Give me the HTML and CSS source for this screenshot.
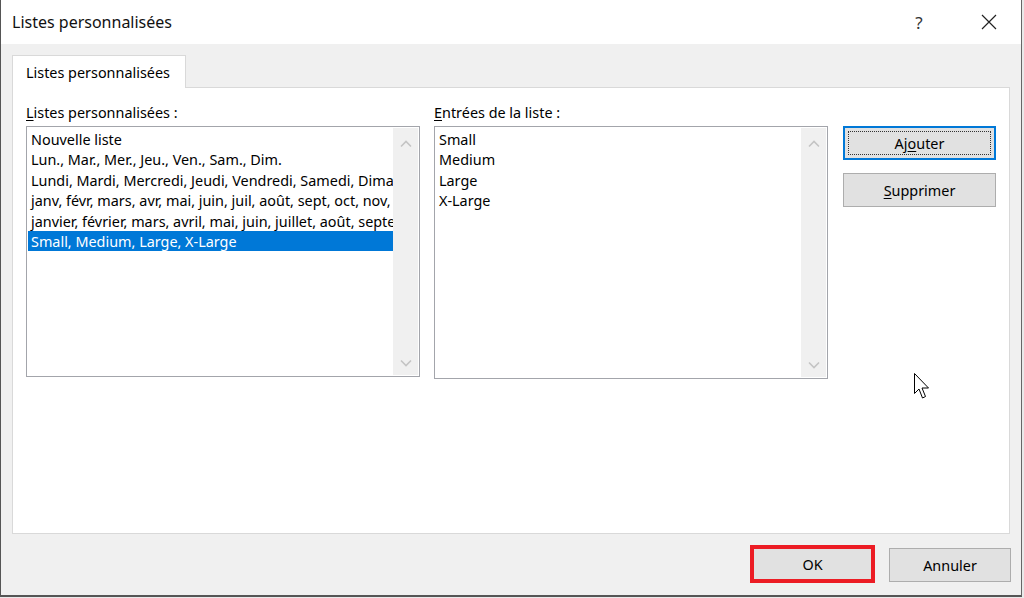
FILE: index.html
```html
<!DOCTYPE html>
<html lang="fr">
<head>
<meta charset="utf-8">
<title>Listes personnalisées</title>
<link rel="stylesheet" href="styles.css">
</head>
<body>
<div class="window">
  <div class="titlebar">
    <div class="title">Listes personnalisées</div>
    <div class="tb-btns">
      <span class="help">?</span>
      <span class="close"><svg width="16" height="16" viewBox="0 0 16 16"><path d="M1 1L15 15M15 1L1 15" stroke="#222" stroke-width="1.2" fill="none"/></svg></span>
    </div>
  </div>
  <div class="content">
    <div class="tabs">
      <div class="tab">Listes personnalisées</div>
    </div>
    <div class="panel">
      <div class="label"><u>L</u>istes personnalisées :</div>
      <div class="label"><u>E</u>ntrées de la liste :</div>
      <div></div>
      <div class="listbox listbox-left">
        <div class="items">
          <div class="item">Nouvelle liste</div>
          <div class="item">Lun., Mar., Mer., Jeu., Ven., Sam., Dim.</div>
          <div class="item">Lundi, Mardi, Mercredi, Jeudi, Vendredi, Samedi, Dimanche</div>
          <div class="item">janv, févr, mars, avr, mai, juin, juil, août, sept, oct, nov, déc</div>
          <div class="item">janvier, février, mars, avril, mai, juin, juillet, août, septembre, octobre, novembre, décembre</div>
          <div class="item selected">Small, Medium, Large, X-Large</div>
        </div>
        <div class="scrollbar">
          <svg class="chev" width="12" height="8" viewBox="0 0 12 8"><path d="M1 6.5L6 1.5L11 6.5" stroke="#c4c4c4" stroke-width="1.6" fill="none"/></svg>
          <svg class="chev" width="12" height="8" viewBox="0 0 12 8"><path d="M1 1.5L6 6.5L11 1.5" stroke="#c4c4c4" stroke-width="1.6" fill="none"/></svg>
        </div>
      </div>
      <div class="listbox listbox-right">
        <div class="items">
          <div class="item">Small</div>
          <div class="item">Medium</div>
          <div class="item">Large</div>
          <div class="item">X-Large</div>
        </div>
        <div class="scrollbar">
          <svg class="chev" width="12" height="8" viewBox="0 0 12 8"><path d="M1 6.5L6 1.5L11 6.5" stroke="#c4c4c4" stroke-width="1.6" fill="none"/></svg>
          <svg class="chev" width="12" height="8" viewBox="0 0 12 8"><path d="M1 1.5L6 6.5L11 1.5" stroke="#c4c4c4" stroke-width="1.6" fill="none"/></svg>
        </div>
      </div>
      <div class="btn-col">
        <button class="btn btn-default"><span class="focus">Aj<u>o</u>uter</span></button>
        <button class="btn"><u>S</u>upprimer</button>
      </div>
    </div>
  </div>
  <div class="footer">
    <button class="btn btn-ok">OK</button>
    <button class="btn btn-cancel">Annuler</button>
  </div>
  <svg class="cursor" width="16" height="27" viewBox="0 0 16 27"><path d="M0.5 0.5L0.5 20.5L5 16L8.5 25L11.5 23.5L8 15L14.5 15Z" fill="#fff" stroke="#000" stroke-width="1"/></svg>
</div>
</body>
</html>
```

FILE: styles.css
```css
* { box-sizing: border-box; }
html, body { margin: 0; padding: 0; }
body {
  background: #e9e9e9;
  font-family: "Noto Sans", "Open Sans", sans-serif;
  font-size: 14.4px;
  color: #000;
  width: 1024px;
  height: 598px;
  overflow: hidden;
}
.window {
  position: relative;
  width: 1022px;
  height: 597px;
  background: #f0f0f0;
  border-left: 1px solid #555;
  border-right: 1px solid #666;
  border-bottom: 2px solid #555;
  display: flex;
  flex-direction: column;
}
.titlebar {
  height: 44px;
  background: #fff;
  display: flex;
  align-items: center;
  justify-content: space-between;
  padding: 0 0 0 11px;
  flex: none;
}
.title {
  font-size: 16px;
  padding-bottom: 1px;
  color: #111;
}
.tb-btns {
  display: flex;
  align-items: center;
  height: 100%;
}
.help {
  font-size: 17px;
  width: 46px;
  text-align: center;
  color: #333;
}
.close {
  width: 46px;
  margin-left: 24px;
  margin-right: 9px;
  display: flex;
  justify-content: center;
}
.content {
  padding: 11px 11px 0 11px;
  flex: none;
}
.tabs {
  display: flex;
  height: 32px;
}
.tab {
  position: relative;
  z-index: 1;
  width: 174px;
  height: 33px;
  background: #fff;
  border: 1px solid #d9d9d9;
  border-bottom: none;
  padding-left: 13px;
  line-height: 34px;
  font-size: 14.4px;
}
.panel {
  height: 447px;
  background: #fff;
  border: 1px solid #d9d9d9;
  padding: 15px 0 0 13px;
  display: grid;
  grid-template-columns: 394px 394px 153px;
  grid-template-rows: 20px auto;
  column-gap: 14px;
  row-gap: 3px;
  align-items: start;
}
.label {
  line-height: 20px;
}
.label u { text-underline-offset: 2px; }
.listbox {
  border: 1px solid #a3a5ab;
  padding: 1px;
  display: flex;
  background: #fff;
}
.listbox-left { height: 251px; }
.listbox-right { height: 253px; }
.items {
  flex: 1;
  min-width: 0;
  overflow: hidden;
  padding-top: 1px;
}
.item {
  height: 20.4px;
  line-height: 21px;
  white-space: nowrap;
  padding-left: 3px;
}
.item.selected {
  background: #0078d7;
  color: #fff;
}
.scrollbar {
  width: 25px;
  background: #f0f0f0;
  display: flex;
  flex-direction: column;
  justify-content: space-between;
  align-items: center;
  padding: 12px 0 8px 0;
}
.chev { display: block; }
.btn-col {
  margin-left: 1px;
  display: flex;
  flex-direction: column;
  gap: 13px;
}
.btn {
  font-family: inherit;
  font-size: 14.4px;
  color: #000;
  background: #e1e1e1;
  border: 1px solid #adadad;
  height: 34px;
  padding: 0;
  margin: 0;
  display: flex;
  align-items: center;
  justify-content: center;
}
.btn u { text-underline-offset: 2px; }
.btn-col .btn { width: 153px; }
.btn-default {
  border: 2px solid #0078d7;
  padding: 3px;
}
.focus {
  flex: 1;
  align-self: stretch;
  border: 1px dotted #333;
  display: flex;
  align-items: center;
  justify-content: center;
}
.footer {
  flex: 1;
  display: flex;
  justify-content: flex-end;
  align-items: flex-start;
  padding: 11px 10px 0 0;
}
.btn-ok {
  width: 125px;
  height: 38px;
  border: 4px solid #ec1c24;
  margin-right: 14px;
}
.btn-cancel {
  width: 122px;
  height: 34px;
  margin-top: 3px;
}
.cursor {
  position: absolute;
  left: 913px;
  top: 373px;
}
```
